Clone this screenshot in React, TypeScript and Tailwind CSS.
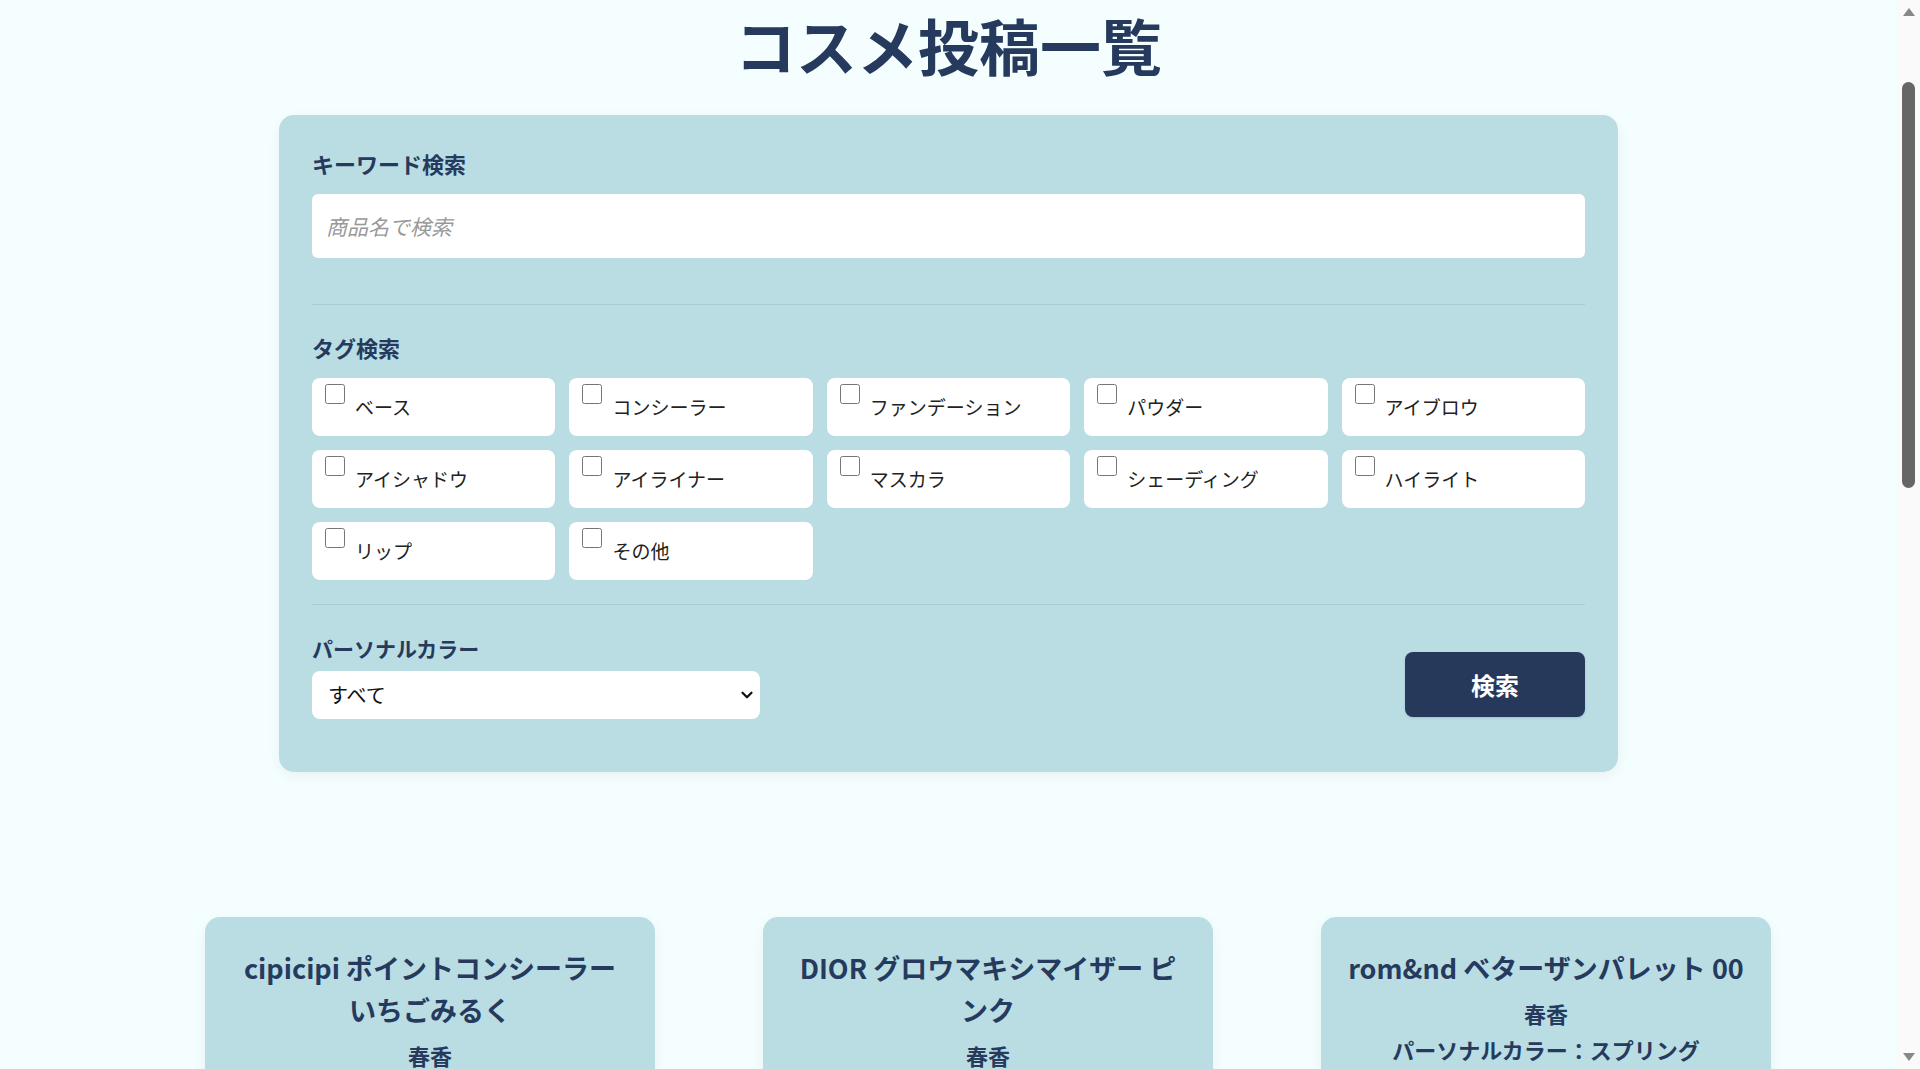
import React, { useState } from 'react';

const TAGS = [
  'ベース',
  'コンシーラー',
  'ファンデーション',
  'パウダー',
  'アイブロウ',
  'アイシャドウ',
  'アイライナー',
  'マスカラ',
  'シェーディング',
  'ハイライト',
  'リップ',
  'その他',
];

const POSTS = [
  { title: 'cipicipi ポイントコンシーラー いちごみるく', user: '春香', color: 'スプリング' },
  { title: 'DIOR グロウマキシマイザー ピンク', user: '春香', color: 'スプリング' },
  { title: 'rom&nd ベターザンパレット 00', user: '春香', color: 'スプリング' },
];

function TagCheck({ label }: { label: string }) {
  const [checked, setChecked] = useState(false);
  return (
    <label className="flex h-[58px] items-center rounded-lg bg-white">
      <input
        type="checkbox"
        checked={checked}
        onChange={() => setChecked(!checked)}
        className="m-0 ml-[13px] mt-[6px] h-5 w-5 self-start"
      />
      <span className="ml-[10px] mt-[1px] text-[19px] text-[#222]">{label}</span>
    </label>
  );
}

function PostCard({ title, user, color }: { title: string; user: string; color: string }) {
  return (
    <div className="w-[450px] shrink-0 rounded-[15px] bg-[#b9dde3] px-[26px] pt-[30px] pb-10 text-center text-[#263a5e] shadow-[0_4px_14px_rgba(0,0,0,0.05)]">
      <h2 className="text-[27px] font-bold leading-[42px]">{title}</h2>
      <p className="mt-[8px] text-[22px] font-bold leading-[32px]">{user}</p>
      <p className="mt-[4px] text-[22px] font-bold leading-[32px]">パーソナルカラー：{color}</p>
      <div className="mx-auto mt-5 h-[300px] w-full rounded-lg bg-white/60" />
      <button className="mt-6 rounded-lg bg-[#263a5e] px-8 py-3 text-[18px] font-bold text-white">
        詳細を見る
      </button>
    </div>
  );
}

// the window's scroll bar, as it shows in the picture
function ScrollBar() {
  return (
    <div className="fixed right-0 top-0 flex h-screen w-[23px] flex-col items-center bg-[#fafafa]">
      <svg viewBox="0 0 14 10" className="mt-[7px] h-[10px] w-[14px]">
        <path d="M7 1L13 9H1Z" fill="#888" />
      </svg>
      <div className="mt-[65px] h-[406px] w-[13px] rounded-full bg-[#666]" />
      <div className="flex-1" />
      <svg viewBox="0 0 14 10" className="mb-[7px] h-[10px] w-[14px]">
        <path d="M1 1H13L7 9Z" fill="#888" />
      </svg>
    </div>
  );
}

export default function App() {
  const [keyword, setKeyword] = useState('');

  return (
    <div className="min-h-screen bg-[#f5fefe] pr-[23px] font-['Noto_Sans_CJK_JP',sans-serif] text-[#263a5e]">
      <h1 className="pt-[14px] text-center text-[61px] font-bold leading-none">コスメ投稿一覧</h1>

      <form
        onSubmit={(e) => e.preventDefault()}
        className="mx-auto mt-10 w-[1339px] rounded-[15px] bg-[#b9dde3] px-[33px] pt-8 pb-[53px] shadow-[0_4px_14px_rgba(0,0,0,0.05)]"
      >
        <p className="text-[22px] font-bold leading-[33px]">キーワード検索</p>
        <input
          value={keyword}
          onChange={(e) => setKeyword(e.target.value)}
          placeholder="商品名で検索"
          className="mt-[14px] block h-16 w-full rounded-md bg-white px-[14px] text-[21px] outline-none placeholder:italic placeholder:text-[#999]"
        />

        <hr className="mt-[46px] border-t border-[#a7ccd2]" />

        <p className="mt-[26px] text-[22px] font-bold leading-[33px]">タグ検索</p>
        <div className="mt-[14px] grid grid-cols-5 gap-[14px]">
          {TAGS.map((t) => (
            <TagCheck key={t} label={t} />
          ))}
        </div>

        <hr className="mt-6 border-t border-[#a7ccd2]" />

        <div className="mt-[27px] flex items-end justify-between">
          <div>
            <p className="text-[21px] font-bold leading-[33px]">パーソナルカラー</p>
            <div className="relative mt-[6px] w-[448px]">
              <select className="block h-12 w-full appearance-none rounded-lg bg-white pl-4 text-[20px] text-[#111] outline-none">
                <option>すべて</option>
                <option>スプリング</option>
                <option>サマー</option>
                <option>オータム</option>
                <option>ウィンター</option>
              </select>
              <svg
                viewBox="0 0 24 24"
                className="pointer-events-none absolute right-[4px] top-1/2 h-[18px] w-[18px] -translate-y-1/2"
                fill="none"
                stroke="#111"
                strokeWidth="3"
                strokeLinecap="round"
                strokeLinejoin="round"
              >
                <path d="M6 9l6 6 6-6" />
              </svg>
            </div>
          </div>
          <button
            type="submit"
            className="mb-[2px] h-[65px] w-[180px] rounded-lg bg-[#27395b] text-[24px] font-bold text-white shadow-sm"
          >
            検索
          </button>
        </div>
      </form>

      <div className="mt-[145px] flex gap-[108px] pl-[205px] pb-20">
        {POSTS.map((p) => (
          <PostCard key={p.title} {...p} />
        ))}
      </div>

      <ScrollBar />
    </div>
  );
}
